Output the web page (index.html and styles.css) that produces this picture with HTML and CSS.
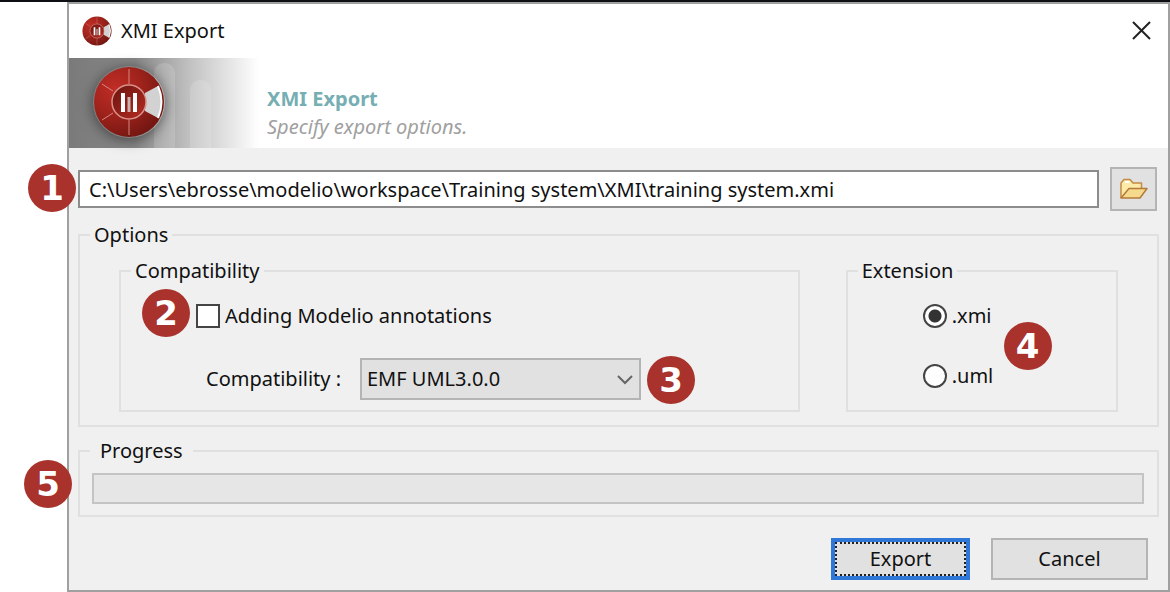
FILE: index.html
```html
<!DOCTYPE html>
<html lang="en">
<head>
    <meta charset="UTF-8">
    <meta name="viewport" content="width=device-width, initial-scale=1.0">
    <title>XMI Export</title>
    <link rel="stylesheet" href="styles.css">
</head>
<body>
    <svg class="defs" width="0" height="0" aria-hidden="true">
        <defs>
            <radialGradient id="disc" cx="0.3" cy="0.3" r="0.75">
                <stop offset="0" stop-color="#c02d26"/>
                <stop offset="0.5" stop-color="#a0231c"/>
                <stop offset="1" stop-color="#741712"/>
            </radialGradient>
            <linearGradient id="hub" x1="0" y1="0" x2="1" y2="1">
                <stop offset="0" stop-color="#6a130e"/>
                <stop offset="1" stop-color="#b62d22"/>
            </linearGradient>
            <symbol id="logo" viewBox="0 0 72 72">
                <circle cx="36" cy="36" r="35" fill="url(#disc)"/>
                <path d="M52 27L65 20Q72 36 65 52L52 45Z" fill="#d2d2d2"/>
                <path d="M65 20Q72 36 65 52" fill="none" stroke="#fff" stroke-width="2"/>
                <path d="M36 3V18M36 54V69M9 18L20 25M9 54L20 47" stroke="#d88680" stroke-width="1"/>
                <circle cx="36" cy="36" r="17" fill="url(#hub)" stroke="#d9918b" stroke-width="1.500"/>
                <path d="M30 27V46M42 27V46" stroke="#fff" stroke-width="4"/>
                <path d="M36 31V46" stroke="#c9b4b2" stroke-width="3"/>
            </symbol>
        </defs>
    </svg>

    <div class="window">
        <div class="titlebar">
            <svg class="titlebar-icon"><use href="#logo"/></svg>
            <span>XMI Export</span>
            <button class="close-btn" type="button" aria-label="Close">
                <svg width="20" height="20" viewBox="0 0 20 20"><path d="M1 1L18 18M18 1L1 18" stroke="#222" stroke-width="2"/></svg>
            </button>
        </div>

        <div class="banner">
            <div class="banner-art">
                <svg class="banner-logo"><use href="#logo"/></svg>
                <div class="pill"></div>
                <div class="pill pill-small"></div>
            </div>
            <div>
                <h1>XMI Export</h1>
                <p>Specify export options.</p>
            </div>
        </div>

        <form class="content">
            <div class="path-row">
                <span class="badge badge-1">1</span>
                <input class="path-input" type="text" aria-label="Export file" value="C:\Users\ebrosse\modelio\workspace\Training system\XMI\training system.xmi">
                <button class="browse-btn" type="button" aria-label="Browse">
                    <svg width="28" height="22" viewBox="0 0 28 22">
                        <path d="M1 20V5L4 1.500H10L13 5H21.500V10" fill="#fbeaa8" stroke="#c38b45" stroke-width="1.500" stroke-linejoin="round"/>
                        <path d="M1 20L9 10.500H27L20 20Z" fill="#f5d98c" stroke="#b57a38" stroke-width="1.500" stroke-linejoin="round"/>
                        <path d="M5 4H9.500" stroke="#fff" stroke-width="2"/>
                    </svg>
                </button>
            </div>

            <fieldset>
                <legend>Options</legend>
                <div class="options">
                    <fieldset class="group">
                        <legend>Compatibility</legend>
                        <div class="check-row">
                            <span class="badge badge-2">2</span>
                            <input type="checkbox" id="annotations">
                            <label for="annotations">Adding Modelio annotations</label>
                        </div>
                        <div class="select-row">
                            <label for="compatibility">Compatibility :</label>
                            <div class="select-box">
                                <select id="compatibility">
                                    <option>EMF UML3.0.0</option>
                                </select>
                                <svg class="chevron" width="16" height="10" viewBox="0 0 16 10"><path d="M1 1L8 8L15 1" fill="none" stroke="#666" stroke-width="2"/></svg>
                                <span class="badge badge-3">3</span>
                            </div>
                        </div>
                    </fieldset>

                    <fieldset class="group">
                        <legend>Extension</legend>
                        <div class="radios">
                            <div class="check-row">
                                <input type="radio" name="extension" id="ext-xmi" checked>
                                <label for="ext-xmi">.xmi</label>
                            </div>
                            <div class="check-row">
                                <input type="radio" name="extension" id="ext-uml">
                                <label for="ext-uml">.uml</label>
                            </div>
                            <span class="badge badge-4">4</span>
                        </div>
                    </fieldset>
                </div>
            </fieldset>

            <fieldset class="progress-group">
                <legend>Progress</legend>
                <div class="progress-box">
                    <span class="badge badge-5">5</span>
                    <progress value="0" max="100" aria-label="Progress"></progress>
                </div>
            </fieldset>

            <div class="actions">
                <button class="action-btn export-btn" type="button">Export</button>
                <button class="action-btn cancel-btn" type="button">Cancel</button>
            </div>
        </form>
    </div>
</body>
</html>
```
FILE: styles.css
```css
* {
    box-sizing: border-box;
}

body {
    margin: 0;
    padding-left: 67px;
    border-top: 2px solid #0d0f12;
    background-color: #fff;
    font-family: 'Noto Sans', sans-serif;
    font-size: 20px;
    line-height: 28px;
    color: #111;
}

input,
select,
button {
    margin: 0;
    font: inherit;
    color: inherit;
}

.defs {
    position: absolute;
}

.window {
    border: 2px solid #a0a0a0;
    background-color: #f0f0f0;
}

.titlebar {
    display: flex;
    align-items: center;
    gap: 9px;
    height: 54px;
    padding: 0 16px 0 13px;
    background-color: #fff;
}

.titlebar-icon {
    width: 30px;
    height: 30px;
}

.close-btn {
    display: flex;
    margin-left: auto;
    padding: 0;
    border: none;
    background: none;
}

.banner {
    display: flex;
    gap: 8px;
    height: 90px;
    background-color: #fff;
}

.banner-art {
    display: flex;
    align-items: flex-end;
    gap: 15px;
    width: 190px;
    padding-left: 24px;
    background: linear-gradient(to right, #7a7a7a 0%, #888 35%, #c4c4c4 65%, #fff 100%);
}

.banner-logo {
    width: 72px;
    height: 72px;
    margin: 0 -26px 10px 0;
    border-radius: 50%;
    box-shadow: 0 2px 14px rgba(0, 0, 0, 0.5);
    z-index: 1;
}

.pill {
    width: 21px;
    height: 85px;
    border-radius: 10px 10px 0 0;
    background-color: rgba(255, 255, 255, 0.15);
}

.pill-small {
    height: 68px;
}

.banner h1,
.banner p {
    margin: 0;
    font-size: 20px;
    line-height: 28px;
}

.banner h1 {
    margin-top: 27px;
    color: #76aeb3;
}

.banner p {
    font-style: italic;
    color: #a0a0a0;
}

.content {
    padding: 19px 9px 10px;
}

.path-row {
    position: relative;
    display: flex;
    align-items: center;
    gap: 11px;
    margin-bottom: 10px;
    padding-right: 2px;
}

.path-input {
    flex: 1;
    min-width: 0;
    height: 38px;
    padding: 0 9px;
    border: 2px solid #8c8c8c;
    background-color: #fff;
}

.browse-btn {
    display: flex;
    align-items: center;
    justify-content: center;
    width: 47px;
    height: 44px;
    padding: 0;
    border: 2px solid #b4b4b4;
    background-color: #e1e1e1;
}

fieldset {
    min-width: 0;
    margin: 0 0 10px;
    padding: 8px 10px 13px;
    border: 2px solid #e0e0e0;
}

legend {
    padding: 0 4px;
}

.options {
    display: grid;
    grid-template-columns: 5fr 2fr;
    gap: 46px;
    margin: 0 29px;
}

.group {
    margin: 0;
    padding: 17px 10px 10px;
}

.check-row {
    position: relative;
    display: flex;
    align-items: center;
    gap: 5px;
    margin-left: 65px;
}

input[type="checkbox"],
input[type="radio"] {
    appearance: none;
    width: 24px;
    height: 24px;
    border: 2px solid #444;
    background-color: #fff;
}

input[type="radio"] {
    border-radius: 50%;
}

input[type="radio"]:checked {
    background: radial-gradient(circle, #333 6px, #fff 7px);
}

.select-row {
    display: flex;
    align-items: center;
    gap: 14px;
    margin: 28px 0 0 75px;
}

.select-row label {
    width: 140px;
    white-space: nowrap;
}

.select-box {
    position: relative;
    width: 281px;
}

.select-box select {
    display: block;
    appearance: none;
    width: 100%;
    height: 42px;
    padding: 0 5px;
    border: 2px solid #b4b4b4;
    border-radius: 0;
    background-color: #e1e1e1;
}

.chevron {
    position: absolute;
    top: 17px;
    right: 8px;
    pointer-events: none;
}

.radios {
    position: relative;
    display: grid;
    gap: 32px;
}

.progress-group {
    margin-bottom: 21px;
    padding: 8px 13px 11px 12px;
}

.progress-group legend {
    margin-left: -2px;
    padding: 0 10px;
}

.progress-box {
    position: relative;
}

progress {
    display: block;
    appearance: none;
    width: 100%;
    height: 31px;
    border: 2px solid #c4c4c4;
    background-color: #e6e6e6;
}

progress::-webkit-progress-bar {
    background-color: #e6e6e6;
}

.actions {
    display: flex;
    justify-content: flex-end;
    gap: 21px;
    padding-right: 11px;
}

.action-btn {
    height: 42px;
    padding: 0;
    border: 2px solid #b4b4b4;
    background-color: #e1e1e1;
}

.export-btn {
    width: 139px;
    border: 4px solid #2f78d7;
    outline: 2px dotted #222;
    outline-offset: -6px;
}

.cancel-btn {
    width: 157px;
}

/* numbered callouts */
.badge {
    position: absolute;
    z-index: 2;
    width: 48px;
    height: 48px;
    border-radius: 50%;
    background-color: #a9322c;
    color: #fff;
    font: bold 34px/48px 'DejaVu Sans', sans-serif;
    text-align: center;
}

.badge-1 {
    left: -50px;
    top: -3px;
}

.badge-2 {
    left: -54px;
    top: -13px;
}

.badge-3 {
    left: 287px;
    top: -2px;
}

.badge-4 {
    left: 146px;
    top: 20px;
}

.badge-5 {
    left: -68px;
    top: -13px;
}
```
